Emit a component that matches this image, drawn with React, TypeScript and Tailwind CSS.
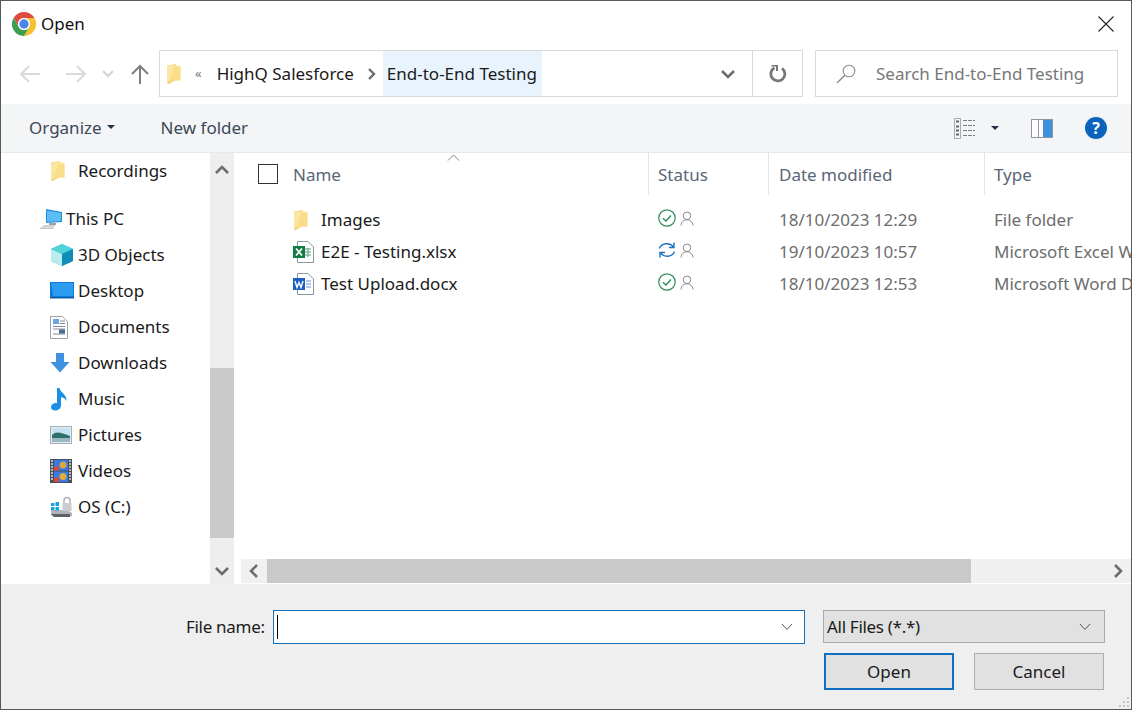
import React from 'react';

const Chrome = () => (
  <svg width="24" height="24" viewBox="0 0 24 24">
    <path d="M1.6 6A12 12 0 0 1 22.4 6H12A6 6 0 0 0 6.8 15Z" fill="#dd4b3e" />
    <path d="M22.4 6A12 12 0 0 1 12 24L17.2 15A6 6 0 0 0 12 6Z" fill="#f5c12e" />
    <path d="M12 24A12 12 0 0 1 1.6 6L6.8 15A6 6 0 0 0 17.2 15Z" fill="#3a9d4f" />
    <circle cx="12" cy="12" r="6" fill="#fff" />
    <circle cx="12" cy="12" r="4.7" fill="#4a86e8" />
  </svg>
);

const Folder = () => (
  <svg width="16" height="22" viewBox="0 0 16 22">
    <path d="M1 2.5 10 1V17L3 21H1Z" fill="#f6d77f" />
    <path d="M1 2.5H14.5V17.5H3L1 21Z" fill="#fbe6a4" />
    <path d="M8 4H14.5V17.5H3.5Z" fill="#f8d97f" opacity="0.75" />
  </svg>
);

const ThisPc = () => (
  <svg width="26" height="22" viewBox="0 0 26 22">
    <path d="M8 1 24 4V14L8 15Z" fill="#1f8fe0" />
    <path d="M9 2.500 23 5V13L9 14Z" fill="#5cbcf3" />
    <path d="M1 21 6 17H17L15 21Z" fill="#c4c8cc" />
    <path d="M3 19.500H15M5 18H16" stroke="#e8eaec" strokeWidth=".6" />
    <path d="M11 15H18V17H11Z" fill="#9aa2a9" />
  </svg>
);

const Objects3d = () => (
  <svg width="24" height="24" viewBox="0 0 24 24">
    <path d="M12 1 23 6V18L12 23 1 18V6Z" fill="#1aa3c9" />
    <path d="M12 1 23 6 12 11 1 6Z" fill="#4fd4d8" />
    <path d="M1 6 12 11V23L1 18Z" fill="#b9ecee" />
    <path d="M12 11 23 6V18L12 23Z" fill="#0f8db8" />
  </svg>
);

const Desktop = () => (
  <svg width="24" height="20" viewBox="0 0 24 20">
    <rect x="0" y="1" width="24" height="16" fill="#0f78d8" />
    <path d="M1 2H23V15H3Z" fill="#2b9cf2" />
    <rect x="0" y="16" width="24" height="1.5" fill="#0b5fa8" />
  </svg>
);

const Documents = () => (
  <svg width="18" height="24" viewBox="0 0 18 24">
    <path d="M.5 1.5H12.5L17.5 6.5V23.5H.5Z" fill="#fff" stroke="#9aa3ad" />
    <path d="M3 4H9V9H3Z" fill="#6aa6dc" />
    <path d="M10 6H15M10 8.500H15M3 11.500H15M3 14H15M3 19H15" stroke="#7f8a96" />
    <rect x="9" y="14.500" width="6" height="4" fill="#4b6b8a" />
  </svg>
);

const Downloads = () => (
  <svg width="20" height="20" viewBox="0 0 20 20">
    <path d="M6 0H14V9H19.500L10 19.500 .5 9H6Z" fill="#3f92e2" />
  </svg>
);

const Music = () => (
  <svg width="18" height="24" viewBox="0 0 18 24">
    <path d="M7 1H9.500C10.500 6 17 7 16.500 14 15.500 11.500 13 10.500 11 10V18.500C11 21.500 8 23.500 5 23.500 2.500 23.500 1 22 1 20 1 17.500 4 15.500 7 16Z" fill="#1b8fe6" />
  </svg>
);

const Pictures = () => (
  <svg width="22" height="18" viewBox="0 0 22 18">
    <rect x=".5" y=".5" width="21" height="17" fill="#e6edf2" stroke="#a3b1bd" />
    <rect x="2" y="2" width="18" height="8" fill="#c9e2f1" />
    <path d="M2 9C6 5 10 6 20 10V12H2Z" fill="#2f6f6c" />
    <rect x="2" y="12" width="18" height="4" fill="#9ab8c4" />
  </svg>
);

const Videos = () => (
  <svg width="22" height="24" viewBox="0 0 22 24">
    <rect width="22" height="24" fill="#46505a" />
    <rect x="4" y="1" width="14" height="10.500" fill="#3a78e6" />
    <rect x="4" y="12.500" width="14" height="10.500" fill="#3a78e6" />
    <circle cx="13" cy="6" r="3.500" fill="#d9a93f" />
    <path d="M4 8 9 7 9 11.500H4Z" fill="#d8473f" />
    <circle cx="13" cy="17.500" r="3.500" fill="#d9b23a" />
    <path d="M4 19 9 18 9 23H4Z" fill="#d8473f" />
    <path d="M1 2H3M1 5H3M1 8H3M1 11H3M1 14H3M1 17H3M1 20H3M19 2H21M19 5H21M19 8H21M19 11H21M19 14H21M19 17H21M19 20H21" stroke="#d5dadf" strokeWidth="1.500" />
  </svg>
);

const Drive = () => (
  <svg width="24" height="22" viewBox="0 0 24 22">
    <path d="M1 14H17L22 17V20L19 21H4L1 19Z" fill="#b0b4b8" />
    <path d="M1 18H20V21H4Z" fill="#5d6268" />
    <path d="M14 7V4.500A3 3 0 0 1 20 4.500V7" fill="none" stroke="#aeb2b6" strokeWidth="1.500" />
    <rect x="12.500" y="7" width="9" height="8" fill="#c9ccd0" />
    <rect x="1" y="7" width="3.500" height="3" fill="#17a4e0" />
    <rect x="5.500" y="6" width="3.500" height="4" fill="#17a4e0" />
    <rect x="1" y="11" width="3.500" height="3" fill="#17a4e0" />
    <rect x="5.500" y="11" width="3.500" height="3.500" fill="#17a4e0" />
  </svg>
);

const Excel = () => (
  <svg width="21" height="22" viewBox="0 0 21 22">
    <path d="M4.500.5H15L20.500 6V21.500H4.500Z" fill="#fff" stroke="#8d949b" />
    <path d="M12 8H18M12 11H18M12 14H18M15 7V16" stroke="#5ba37c" />
    <rect x="0" y="5" width="12" height="12" fill="#107c41" />
    <path d="M3 7.500 9 14.500M9 7.500 3 14.500" stroke="#fff" strokeWidth="1.800" />
  </svg>
);

const Word = () => (
  <svg width="21" height="22" viewBox="0 0 21 22">
    <path d="M4.500.5H15L20.500 6V21.500H4.500Z" fill="#fff" stroke="#8d949b" />
    <path d="M13 8H18M13 11H18M13 14H18" stroke="#5e8fd0" />
    <rect x="0" y="5" width="12" height="12" fill="#1d5fc0" />
    <path d="M2 8 4 14.500 6 9.500 8 14.500 10 8" fill="none" stroke="#fff" strokeWidth="1.400" />
  </svg>
);

const Synced = () => (
  <svg width="18" height="18" viewBox="0 0 18 18" fill="none" stroke="#2e8b57" strokeWidth="1.200">
    <circle cx="9" cy="9" r="8.200" />
    <path d="M5 9.300 7.900 12 13 6.500" strokeWidth="1.400" />
  </svg>
);

const Syncing = () => (
  <svg width="18" height="18" viewBox="0 0 18 18" fill="none" stroke="#1a73c0" strokeWidth="1.400">
    <path d="M1.500 7.500C3 2.500 11.500 .5 15.500 6" />
    <path d="M16 1.500V6.500H11" />
    <path d="M16.500 10.500C15 15.500 6.500 17.500 2.500 12" />
    <path d="M2 16.500V11.500H7" />
  </svg>
);

const Person = () => (
  <svg width="14" height="15" viewBox="0 0 14 15" fill="none" stroke="#8b8b8b" strokeWidth="1">
    <circle cx="7" cy="4.800" r="3.800" />
    <path d="M1 14.500C1.500 10.500 4 8.800 7 8.800S12.500 10.500 13 14.500" />
  </svg>
);

const Chevron = ({ d, color = '#6d6d6d' }: { d: string; color?: string }) => (
  <svg width="14" height="14" viewBox="0 0 14 14" fill="none" stroke={color} strokeWidth="2.600">
    <path d={d} />
  </svg>
);

const Arrow = ({ d, color, w = 22 }: { d: string; color: string; w?: number }) => (
  <svg width={w} height="20" viewBox={`0 0 ${w} 20`} fill="none" stroke={color} strokeWidth="2">
    <path d={d} />
  </svg>
);

const SmallChevron = () => (
  <svg width="12" height="8" viewBox="0 0 12 8" fill="none" stroke="#555" strokeWidth="1">
    <path d="M1 1 6 6.500 11 1" />
  </svg>
);

const Caret = () => <span className="h-0 w-0 border-x-[4px] border-t-[4px] border-x-transparent border-t-[#23324a]" />;

const navItems = [
  { label: 'Recordings', icon: <Folder /> },
  { label: 'This PC', icon: <ThisPc /> },
  { label: '3D Objects', icon: <Objects3d /> },
  { label: 'Desktop', icon: <Desktop /> },
  { label: 'Documents', icon: <Documents /> },
  { label: 'Downloads', icon: <Downloads /> },
  { label: 'Music', icon: <Music /> },
  { label: 'Pictures', icon: <Pictures /> },
  { label: 'Videos', icon: <Videos /> },
  { label: 'OS (C:)', icon: <Drive /> },
];

const files = [
  { name: 'Images', icon: <Folder />, status: <Synced />, date: '18/10/2023 12:29', type: 'File folder' },
  { name: 'E2E - Testing.xlsx', icon: <Excel />, status: <Syncing />, date: '19/10/2023 10:57', type: 'Microsoft Excel Worksheet' },
  { name: 'Test Upload.docx', icon: <Word />, status: <Synced />, date: '18/10/2023 12:53', type: 'Microsoft Word Document' },
];

export default function App() {
  return (
    <div className="flex h-[710px] w-[1132px] flex-col overflow-hidden border border-[#585858] bg-white font-['Noto_Sans',sans-serif] text-[17px] text-[#1a1a1a]">
      {/* title bar */}
      <div className="flex h-[45px] shrink-0 items-center pl-[11px] pr-[17px]">
        <Chrome />
        <span className="ml-[5px] text-[#111]">Open</span>
        <svg className="ml-auto" width="16" height="16" viewBox="0 0 16 16" stroke="#222" strokeWidth="1.100">
          <path d="M.5.5 15.500 15.500M15.500.5 .5 15.500" />
        </svg>
      </div>

      {/* address row */}
      <div className="flex h-[58px] shrink-0 items-center pb-[3px] pl-[18px] pr-[13px]">
        <Arrow color="#dadada" d="M21 10H2M10 2 2 10 10 18" />
        <div className="ml-[24px]">
          <Arrow color="#dadada" d="M1 10H20M12 2 20 10 12 18" />
        </div>
        <svg className="ml-[15px]" width="12" height="8" viewBox="0 0 12 8" fill="none" stroke="#d4d4d4" strokeWidth="2">
          <path d="M1 1 6 6 11 1" />
        </svg>
        <div className="ml-[17px]">
          <Arrow w={18} color="#7f7f7f" d="M9 20V2M1 10 9 2 17 10" />
        </div>
        <div className="ml-[10px] flex h-[47px] w-[644px] items-center border border-[#d9d9d9]">
          <div className="ml-[6px] flex w-[16px] justify-center">
            <Folder />
          </div>
          <span className="ml-[13px] text-[13px] text-[#777]">«</span>
          <span className="ml-[15px]">HighQ Salesforce</span>
          <div className="ml-[13px] mr-[6px]">
            <svg width="10" height="12" viewBox="0 0 10 12" fill="none" stroke="#6d6d6d" strokeWidth="2.400">
              <path d="M2 1 7 6 2 11" />
            </svg>
          </div>
          <span className="flex h-full w-[159px] items-center bg-[#e8f3fd] pl-[4px]">End-to-End Testing</span>
          <div className="ml-auto flex h-full items-center">
            <Chevron color="#6d6d6d" d="M1 4 7 10 13 4" />
            <div className="ml-[17px] flex h-full w-[50px] items-center justify-center border-l border-[#d9d9d9]">
              <svg width="18" height="18" viewBox="0 0 18 18" fill="none" stroke="#777" strokeWidth="2.800">
                <path d="M5.500 2.800A7 7 0 1 0 13 3.300" />
                <path d="M2.500 .5H8V6" strokeWidth="2" />
              </svg>
            </div>
          </div>
        </div>
        <div className="ml-auto flex h-[47px] w-[303px] items-center border border-[#d9d9d9] pl-[20px]">
          <svg width="20" height="20" viewBox="0 0 20 20" fill="none" stroke="#8d8d8d" strokeWidth="1.100">
            <circle cx="13" cy="7" r="5.800" />
            <path d="M8.800 11.200 1 19" strokeWidth="1.500" />
          </svg>
          <span className="ml-[20px] text-[#777]">Search End-to-End Testing</span>
        </div>
      </div>

      {/* toolbar */}
      <div className="flex h-[49px] shrink-0 items-center border-b border-[#e6e8eb] bg-[#f4f5f7] pl-[28px] pr-[24px] text-[#3c4859]">
        <span>Organize</span>
        <div className="mb-[3px] ml-[5px] flex">
          <Caret />
        </div>
        <span className="ml-[46px]">New folder</span>
        <svg className="ml-auto" width="22" height="21" viewBox="0 0 22 21" fill="none" stroke="#75808c">
          <rect x=".5" y=".5" width="6" height="20" stroke="#a5adb5" />
          <path d="M2 3.500H5M2 8.500H5M2 12.500H5M2 16.500H5" strokeWidth="2" stroke="#5d6670" />
          <path d="M9 2.500H21M9 7.500H21M9 12.500H21M9 17.500H21" strokeDasharray="4 1" />
        </svg>
        <div className="ml-[15px] flex">
          <Caret />
        </div>
        <svg className="ml-[32px]" width="22" height="19" viewBox="0 0 22 19">
          <rect x=".5" y=".5" width="21" height="18" fill="#fff" stroke="#8e959c" />
          <rect x="7" y="1" width="1" height="17" fill="#8e959c" />
          <rect x="12" y="1" width="9" height="17" fill="#3e90de" />
        </svg>
        <div className="ml-[32px] flex h-[22px] w-[22px] items-center justify-center rounded-full bg-[#0b63bd] text-[16px] font-bold text-white">?</div>
      </div>

      {/* main */}
      <div className="flex h-[431px] shrink-0">
        <div className="w-[209px] shrink-0 overflow-hidden">
          {navItems.map((item) => (
            <div
              key={item.label}
              className={item.label === 'This PC' ? 'mt-[12px] flex h-[36px] items-center pl-[37px]' : 'flex h-[36px] items-center pl-[49px]'}
            >
              <div className="flex w-[28px] justify-start">{item.icon}</div>
              <span>{item.label}</span>
            </div>
          ))}
        </div>

        <div className="flex w-[24px] shrink-0 flex-col items-center bg-[#eeeeee]">
          <div className="flex h-[30px] items-center pt-[4px]">
            <Chevron d="M1 10 7 4 13 10" />
          </div>
          <div className="h-[185px]" />
          <div className="h-[170px] w-full bg-[#c9c9c9]" />
          <div className="flex flex-1 items-end pb-[6px]">
            <Chevron d="M1 4 7 10 13 4" />
          </div>
        </div>

        <div className="ml-[7px] flex min-w-0 flex-1 flex-col">
          <div className="relative flex h-[42px] shrink-0 text-[#5a6675]">
            <svg className="absolute left-[206px] top-[1px]" width="13" height="7" viewBox="0 0 13 7" fill="none" stroke="#808080">
              <path d="M1 6.500 6.500 1 12 6.500" />
            </svg>
            <div className="flex w-[408px] shrink-0 items-center border-r border-[#e5e5e5] pl-[17px]">
              <span className="h-[20px] w-[20px] border border-[#333]" />
              <span className="ml-[15px] mt-[1px]">Name</span>
            </div>
            <div className="flex w-[120px] shrink-0 items-center border-r border-[#e5e5e5] pl-[9px] pt-[1px]">Status</div>
            <div className="flex w-[216px] shrink-0 items-center border-r border-[#e5e5e5] pl-[10px] pt-[1px]">Date modified</div>
            <div className="flex items-center pl-[9px] pt-[1px]">Type</div>
          </div>

          <div className="flex-1 overflow-hidden pt-[9px]">
            {files.map((f) => (
              <div key={f.name} className="flex h-[32px] items-center whitespace-nowrap">
                <div className="flex w-[408px] shrink-0 items-center pl-[52px]">
                  <div className="flex w-[28px] justify-start">{f.icon}</div>
                  <span>{f.name}</span>
                </div>
                <div className="flex w-[120px] shrink-0 items-center gap-[4px] pb-[4px] pl-[9px]">
                  {f.status}
                  <Person />
                </div>
                <div className="w-[216px] shrink-0 pl-[10px] text-[#6d6d6d]">{f.date}</div>
                <div className="pl-[9px] text-[#6d6d6d]">{f.type}</div>
              </div>
            ))}
          </div>

          <div className="mb-[1px] flex h-[24px] shrink-0 items-center bg-[#f0f0f0]">
            <div className="flex w-[26px] justify-center">
              <Chevron d="M10 1 4 7 10 13" />
            </div>
            <div className="h-full w-[704px] bg-[#c9c9c9]" />
            <div className="ml-auto flex w-[26px] justify-center">
              <Chevron d="M4 1 10 7 4 13" />
            </div>
          </div>
        </div>
      </div>

      {/* footer */}
      <div className="relative flex-1 bg-[#efefef] pl-[185px] pt-[26px] text-[#1a1a1a]">
        <div className="flex items-start">
          <span className="w-[87px] pt-[4px] tracking-[-0.3px]">File name:</span>
          <div className="flex h-[34px] w-[532px] items-center border border-[#1b6fb3] bg-white pl-[3px] pr-[11px]">
            <span className="h-[24px] w-px bg-black" />
            <div className="ml-auto">
              <SmallChevron />
            </div>
          </div>
          <div className="ml-[18px] flex h-[33px] w-[282px] items-center border border-[#a9a9a9] bg-[#e1e1e1] pl-[3px] pr-[13px] tracking-[-0.3px]">
            All Files (*.*)
            <div className="ml-auto">
              <SmallChevron />
            </div>
          </div>
        </div>
        <div className="ml-[638px] mt-[9px] flex gap-[20px]">
          <div className="flex h-[37px] w-[130px] items-center justify-center border-2 border-[#0f6fc0] bg-[#e1e1e1] pt-[1px]">Open</div>
          <div className="flex h-[37px] w-[130px] items-center justify-center border border-[#adadad] bg-[#e1e1e1] pt-[1px]">Cancel</div>
        </div>
        <svg className="absolute bottom-[1px] right-[1px]" width="11" height="11" viewBox="0 0 11 11" fill="#c4c4c4">
          <rect x="8" y="0" width="2" height="2" />
          <rect x="4" y="4" width="2" height="2" />
          <rect x="8" y="4" width="2" height="2" />
          <rect x="0" y="8" width="2" height="2" />
          <rect x="4" y="8" width="2" height="2" />
          <rect x="8" y="8" width="2" height="2" />
        </svg>
      </div>
    </div>
  );
}
